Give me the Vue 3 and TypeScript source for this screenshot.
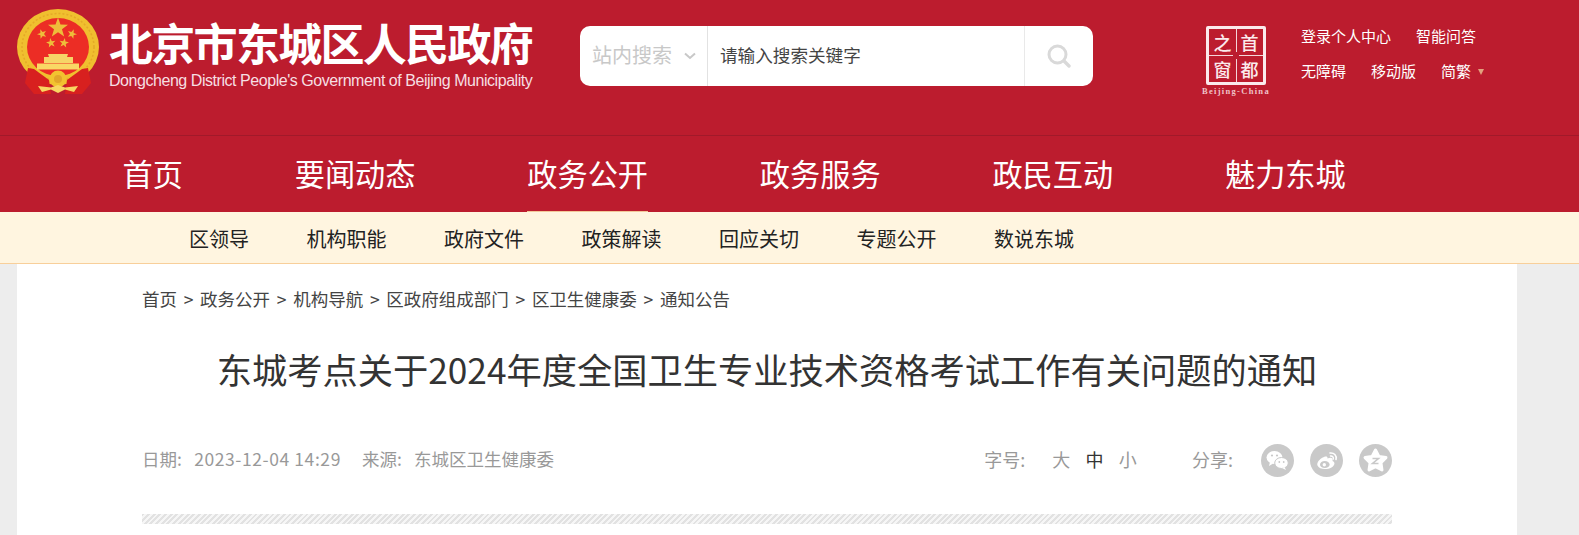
<script setup lang="ts">
const mainNav = [
  { label: '首页' },
  { label: '要闻动态' },
  { label: '政务公开', active: true },
  { label: '政务服务' },
  { label: '政民互动' },
  { label: '魅力东城' },
]
const subNav = ['区领导', '机构职能', '政府文件', '政策解读', '回应关切', '专题公开', '数说东城']
const crumbs = ['首页', '政务公开', '机构导航', '区政府组成部门', '区卫生健康委', '通知公告']

const starPoints = (cx: number, cy: number, r: number, rot = 0, inner = 0.4) => {
  const pts: string[] = []
  for (let i = 0; i < 10; i++) {
    const rad = i % 2 ? r * inner : r
    const a = ((-90 + rot + i * 36) * Math.PI) / 180
    pts.push(`${(cx + rad * Math.cos(a)).toFixed(2)},${(cy + rad * Math.sin(a)).toFixed(2)}`)
  }
  return pts.join(' ')
}

const smallStars = [
  { x: 25, y: 25, rot: -20 },
  { x: 55, y: 25, rot: 20 },
  { x: 34, y: 34, rot: -10 },
  { x: 47, y: 34, rot: 10 },
]
</script>

<template>
  <div class="page">
    <header class="top">
      <div class="brand">
        <svg class="emblem" width="82" height="86" viewBox="0 0 82 86">
          <ellipse cx="41" cy="38" rx="41" ry="38" fill="#f0bf2f" />
          <ellipse cx="41" cy="38" rx="36" ry="33.500" fill="none" stroke="#dfa024" stroke-width="1.500" stroke-dasharray="2 2" opacity=".7" />
          <ellipse cx="41" cy="38" rx="31" ry="29" fill="#ec2d25" />
          <polygon :points="starPoints(41, 19, 10.500)" fill="#eebd3a" />
          <polygon v-for="s in smallStars" :key="s.x" :points="starPoints(s.x, s.y, 5, s.rot)" fill="#eebd3a" />
          <path d="M31 45 L51 45 L50 48 L56 48 L56 54 L27 54 L27 48 L32 48 Z" fill="#f6d467" />
          <rect x="20" y="54.500" width="42" height="6" fill="#f9d765" />
          <path d="M11 59 L17 60 L32 71 L34 85 L17 85 L8 74 Z" fill="#d8201f" />
          <path d="M71 59 L65 60 L50 71 L48 85 L65 85 L74 74 Z" fill="#d8201f" />
          <circle cx="41" cy="70" r="8.500" fill="#f2c230" />
          <circle cx="41" cy="70" r="4" fill="#e2a52a" />
          <path d="M21 77 L34 78.500 L41 76 L48 78.500 L61 77 L57 83 L48 80.500 L41 84 L34 80.500 L25 83 Z" fill="#f8d662" />
        </svg>
        <div class="brand-text">
          <div class="brand-cn">北京市东城区人民政府</div>
          <div class="brand-en">Dongcheng District People's Government of Beijing Municipality</div>
        </div>
      </div>

      <div class="search">
        <div class="search-scope">
          <span>站内搜索</span>
          <svg width="12" height="8" viewBox="0 0 12 8"><path d="M1 1.500 L6 6 L11 1.500" fill="none" stroke="#c8c8c8" stroke-width="2" /></svg>
        </div>
        <div class="search-input">请输入搜索关键字</div>
        <div class="search-btn">
          <svg width="24" height="24" viewBox="0 0 24 24">
            <circle cx="10.500" cy="10.500" r="8.500" fill="none" stroke="#d9d9d9" stroke-width="3" />
            <path d="M17 17 L22 22" stroke="#d9d9d9" stroke-width="3.400" stroke-linecap="round" />
          </svg>
        </div>
      </div>

      <div class="capital">
        <div class="capital-box">
          <span>之</span><span>首</span><span>窗</span><span>都</span>
        </div>
        <div class="capital-en">Beijing-China</div>
      </div>

      <div class="links">
        <div class="links-row">
          <a>登录个人中心</a>
          <a>智能问答</a>
        </div>
        <div class="links-row">
          <a>无障碍</a>
          <a>移动版</a>
          <a class="lang">简繁<i class="caret"></i></a>
        </div>
      </div>
    </header>

    <nav class="main-nav">
      <a v-for="item in mainNav" :key="item.label" :class="{ active: item.active }">{{ item.label }}</a>
    </nav>

    <nav class="sub-nav">
      <a v-for="item in subNav" :key="item">{{ item }}</a>
    </nav>

    <main class="content">
      <div class="crumbs">
        <template v-for="(c, i) in crumbs" :key="c">
          <span v-if="i" class="sep">&gt;</span>
          <a>{{ c }}</a>
        </template>
      </div>

      <h1 class="title">东城考点关于2024年度全国卫生专业技术资格考试工作有关问题的通知</h1>

      <div class="meta">
        <div class="meta-left">
          <span><span class="key">日期:</span><span class="date">2023-12-04 14:29</span></span>
          <span><span class="key">来源:</span>东城区卫生健康委</span>
        </div>
        <div class="meta-right">
          <span class="size-label">字号:</span>
          <span class="size">大</span>
          <span class="size current">中</span>
          <span class="size">小</span>
          <span class="share-label">分享:</span>
          <a class="share">
            <svg width="33" height="33" viewBox="0 0 33 33">
              <circle cx="16.500" cy="16.500" r="16.500" fill="#c9c9c9" />
              <ellipse cx="13.500" cy="13.500" rx="8" ry="6.500" fill="#fff" />
              <path d="M9 18 L8 22 L12 19.500 Z" fill="#fff" />
              <ellipse cx="20.500" cy="19" rx="6.800" ry="5.500" fill="#fff" stroke="#c9c9c9" stroke-width="1" />
              <path d="M23.500 23 L25 26 L21 24 Z" fill="#fff" />
              <circle cx="11" cy="11.500" r="1.100" fill="#c9c9c9" />
              <circle cx="16" cy="11.500" r="1.100" fill="#c9c9c9" />
              <circle cx="18.300" cy="18" r=".9" fill="#c9c9c9" />
              <circle cx="22.700" cy="18" r=".9" fill="#c9c9c9" />
            </svg>
          </a>
          <a class="share">
            <svg width="33" height="33" viewBox="0 0 33 33">
              <circle cx="16.500" cy="16.500" r="16.500" fill="#c9c9c9" />
              <path d="M14 13 C9 15 6.500 19 7.500 21.500 C9 25.500 17 26 21.500 23.500 C25 21.500 25.500 18 22.500 17 C23.500 14 21 13 17.500 14.500 C17.800 12.500 16 12 14 13 Z" fill="#fff" />
              <ellipse cx="14.800" cy="20.500" rx="4.800" ry="3.600" fill="#c9c9c9" />
              <circle cx="14.300" cy="20.700" r="1.700" fill="#fff" />
              <path d="M20 9 C24 8.500 27 11.500 26 15.500" fill="none" stroke="#fff" stroke-width="1.600" stroke-linecap="round" />
              <path d="M20.500 12 C22.500 11.800 23.700 13 23.300 15" fill="none" stroke="#fff" stroke-width="1.400" stroke-linecap="round" />
            </svg>
          </a>
          <a class="share">
            <svg width="33" height="33" viewBox="0 0 33 33">
              <circle cx="16.500" cy="16.500" r="16.500" fill="#c9c9c9" />
              <polygon :points="starPoints(16.500, 17, 11, 0, 0.52)" fill="#fff" stroke="#fff" stroke-width="3" stroke-linejoin="round" />
              <path d="M13.500 14.500 H19.500 L13.500 19.500 H19.500" fill="none" stroke="#c9c9c9" stroke-width="1.600" />
            </svg>
          </a>
        </div>
      </div>

      <div class="stripe"></div>
    </main>
  </div>
</template>

<style>
html,
body {
  margin: 0;
  overflow: hidden;
  background: #ededed;
}
</style>

<style scoped>
.page {
  height: 535px;
  font-family: "Noto Sans CJK SC", "Liberation Sans", sans-serif;
  overflow: hidden;
}
.top {
  height: 136px;
  box-sizing: border-box;
  background: #bc1c2e;
  border-bottom: 1px solid #a1192a;
  display: flex;
  align-items: flex-start;
  color: #fff;
}
.brand {
  display: flex;
  align-items: flex-start;
  padding: 9px 0 0 17px;
  width: 580px;
  box-sizing: border-box;
}
.emblem {
  flex: none;
}
.brand-text {
  margin-left: 10px;
  padding-top: 8px;
}
.brand-cn {
  font-size: 44px;
  line-height: 50px;
  font-weight: 700;
  letter-spacing: -1.7px;
  white-space: nowrap;
}
.brand-en {
  font-family: "Liberation Sans", sans-serif;
  font-size: 16px;
  line-height: 20px;
  margin-top: 4px;
  color: #f6dfe2;
  letter-spacing: -0.45px;
  white-space: nowrap;
}
.search {
  margin-top: 26px;
  width: 513px;
  height: 60px;
  border-radius: 10px;
  background: #fff;
  display: flex;
  overflow: hidden;
}
.search-scope {
  width: 128px;
  box-sizing: border-box;
  padding-left: 12px;
  display: flex;
  align-items: center;
  gap: 12px;
  font-size: 20px;
  color: #c8c8c8;
  border-right: 1px solid #e2e2e2;
}
.search-scope span {
  padding-bottom: 3px;
}
.search-input {
  flex: 1;
  padding: 0 0 3px 12px;
  display: flex;
  align-items: center;
  font-size: 17.6px;
  color: #444;
  border-right: 1px solid #e9e9e9;
}
.search-btn {
  width: 68px;
  display: flex;
  align-items: center;
  justify-content: center;
}
.capital {
  margin-left: 109px;
  margin-top: 26px;
  width: 68px;
  display: flex;
  flex-direction: column;
  align-items: center;
}
.capital-box {
  width: 60px;
  height: 59px;
  box-sizing: border-box;
  border: 3px solid #fbeaec;
  border-radius: 2px;
  display: grid;
  grid-template-columns: 1fr 1fr;
  grid-template-rows: 1fr 1fr;
  background:
    linear-gradient(to bottom, #f4d5d9 0 44%, transparent 44% 56%, #f4d5d9 56%) center / 1px 100% no-repeat,
    linear-gradient(to right, #f4d5d9 0 44%, transparent 44% 56%, #f4d5d9 56%) center / 100% 1px no-repeat;
}
.capital-box span {
  font-size: 18px;
  font-weight: 500;
  line-height: 26px;
  text-align: center;
  color: #fbeaec;
}
.capital-en {
  margin-top: 2px;
  font-family: "Liberation Serif", serif;
  font-size: 8.5px;
  line-height: 9px;
  font-weight: 700;
  letter-spacing: 1.3px;
  color: #f0c3c9;
  white-space: nowrap;
}
.links {
  margin-left: 31px;
  padding-top: 25px;
  font-size: 15px;
  line-height: 22px;
}
.links-row {
  display: flex;
  gap: 25px;
  white-space: nowrap;
}
.links-row + .links-row {
  margin-top: 13px;
}
.lang {
  display: inline-flex;
  align-items: center;
}
.caret {
  margin: 2px 0 0 7px;
  border-left: 3.5px solid transparent;
  border-right: 3.5px solid transparent;
  border-top: 6px solid #e2a27e;
}
.main-nav {
  height: 76px;
  background: #bc1c2e;
  display: flex;
  gap: 111.8px;
  padding-left: 122.5px;
  font-size: 30.2px;
  line-height: 75px;
  color: #fff;
}
.main-nav a {
  height: 76px;
  box-sizing: border-box;
  white-space: nowrap;
}
.main-nav a.active {
  box-shadow: inset 0 -1px 0 #f3c89a;
}
.sub-nav {
  height: 52px;
  box-sizing: border-box;
  background: #fff5e0;
  border-bottom: 1px solid #f8cf9a;
  display: flex;
  gap: 57.5px;
  padding-left: 189px;
  font-size: 20px;
  line-height: 53px;
  color: #222;
}
.content {
  margin-left: 17px;
  width: 1500px;
  height: 271px;
  box-sizing: border-box;
  padding: 0 125px;
  background: #fff;
}
.crumbs {
  padding-top: 23px;
  display: flex;
  gap: 6.7px;
  font-size: 17.5px;
  line-height: 24px;
  color: #444;
}
.title {
  margin: 33px 0 0;
  text-align: center;
  font-size: 35.25px;
  line-height: 50px;
  font-weight: 400;
  color: #333;
  white-space: nowrap;
}
.meta {
  margin-top: 50px;
  height: 33px;
  display: flex;
  justify-content: space-between;
  align-items: center;
  font-size: 17.5px;
  color: #999;
}
.meta-left {
  display: flex;
  gap: 21px;
  padding-bottom: 4px;
}
.key {
  margin-right: 12.3px;
}
.date {
  letter-spacing: 0.58px;
}
.meta-right {
  display: flex;
  align-items: center;
  font-size: 18px;
}
.size-label,
.size,
.share-label {
  padding-bottom: 4px;
}
.size-label {
  margin-right: 27px;
}
.size {
  margin-right: 15.25px;
}
.size.current {
  color: #333;
}
.share-label {
  margin-left: 40px;
  margin-right: 28px;
}
.share {
  display: block;
  height: 33px;
  margin-left: 16px;
}
.share-label + .share {
  margin-left: 0;
}
.stripe {
  margin-top: 37px;
  height: 10px;
  background: repeating-linear-gradient(135deg, #e2e2e2 0 2px, #f6f6f6 2px 4px);
}
</style>
